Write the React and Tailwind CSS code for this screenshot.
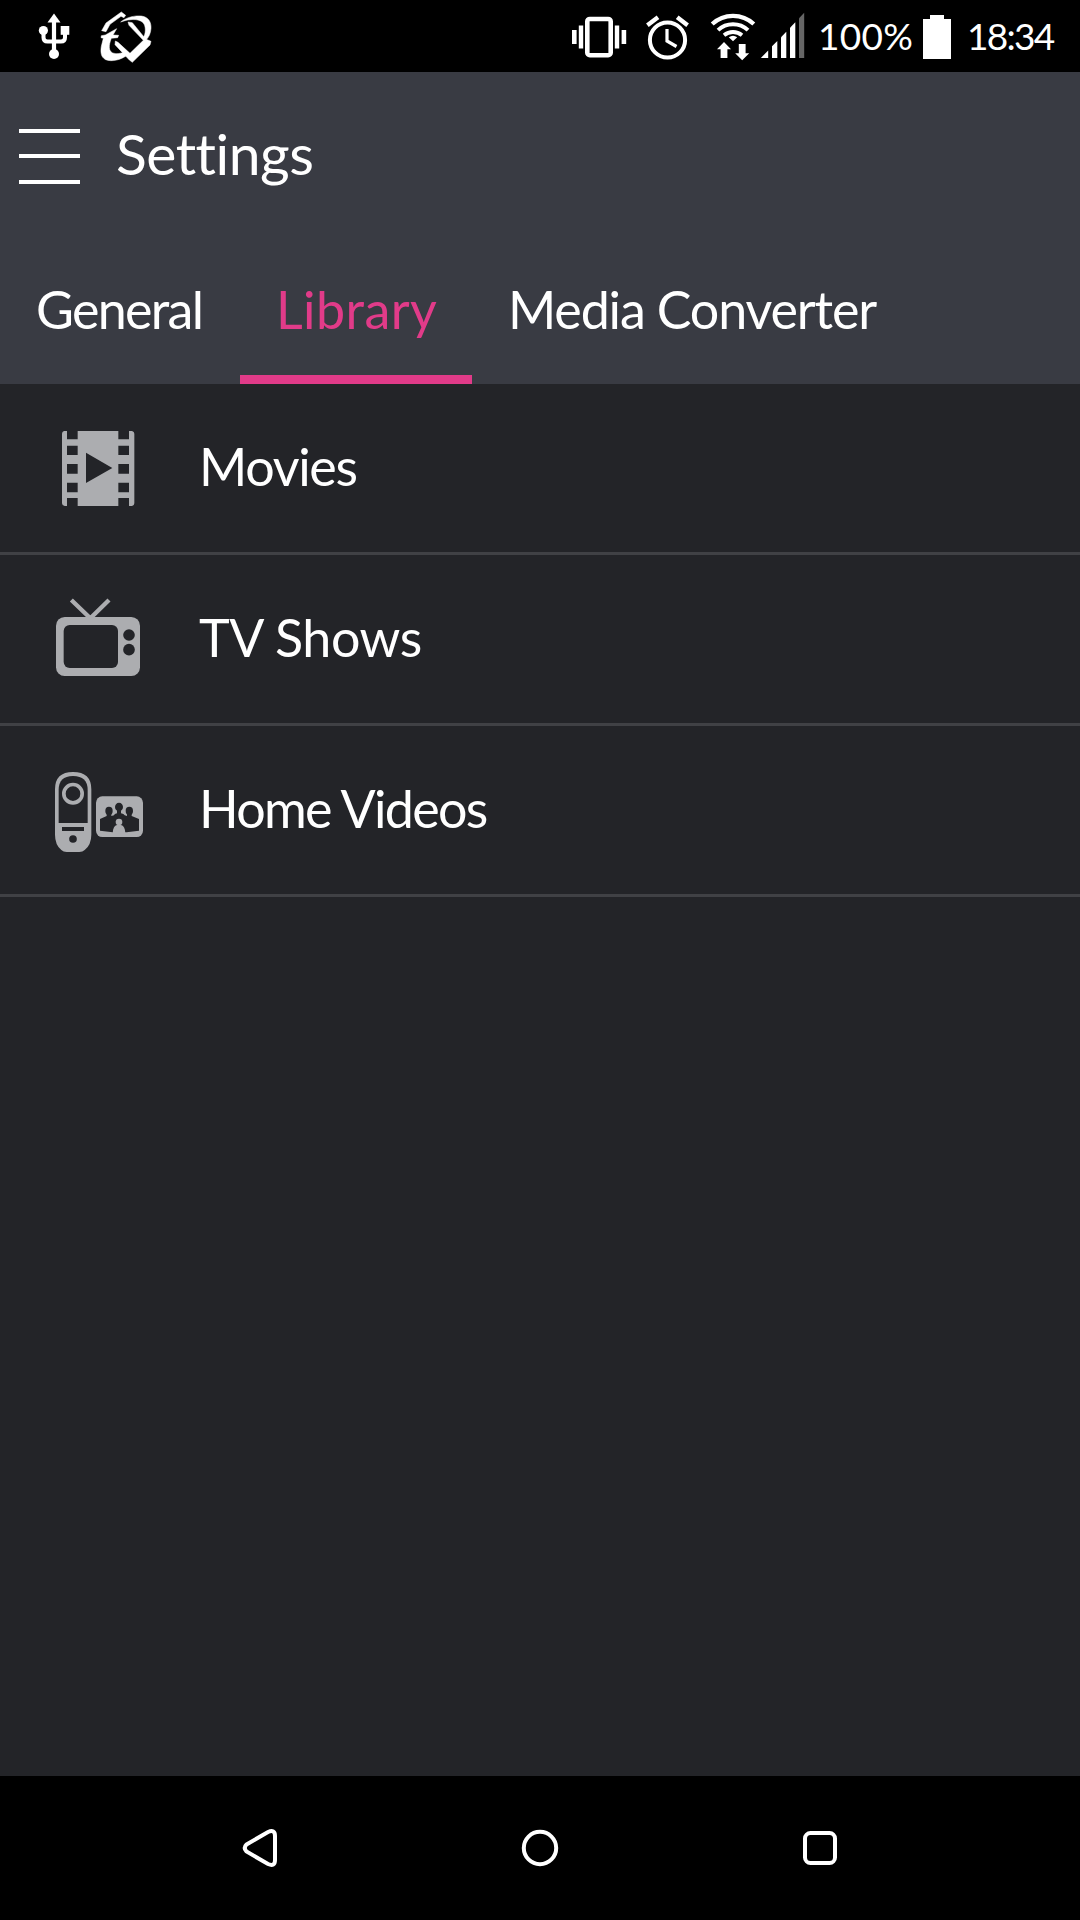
import React, { useState } from 'react';

const UsbIcon = () => (
  <svg className="h-[72px] w-[36px]" viewBox="36 0 36 72" fill="none">
    <path d="M54 13.5 L60.5 22.5 H47.5 Z" fill="#fff" />
    <path d="M54 20 V52" stroke="#fff" strokeWidth="4.2" />
    <path d="M43.5 31 V37.5 Q43.5 41.5 47.5 41.5 H61 Q65 41.5 65 37.5 V30" stroke="#fff" strokeWidth="4" />
    <circle cx="43.4" cy="30.5" r="4.6" fill="#fff" />
    <rect x="60.7" y="26" width="8.6" height="8.8" fill="#fff" />
    <circle cx="54" cy="54" r="5" fill="#fff" />
  </svg>
);

const SecurityIcon = () => (
  <svg className="ml-7 h-[72px] w-[52px]" viewBox="300 0 156 216" fill="#fff" stroke="#fff" strokeWidth="1.5">
    <path d="M305 92 L318 69 L364 36 L377 46 L372 53 L363 49 L330 73 L318 95 Z" />
    <path d="M362 66 C378 52 404 46 424 48 C446 51 454 67 453 85 C452 100 447 112 437 121 L430 113 C437 101 438 84 432 72 C423 57 396 54 362 66 Z" />
    <path d="M384 66 L397 68 L437 117 L453 124 L450 135 L397 187 L388 180 L345 134 L346 123 L354 127 L390 160 L430 121 L387 76 Z" />
    <path d="M350 86 L339 105 L356 106 L353 113 L334 115 C325 138 326 153 338 159 C350 163 362 160 372 157 L378 168 C360 180 335 186 317 179 C303 172 301 157 304 139 L310 115 L303 113 L304 107 L316 105 Z" />
  </svg>
);

const VibrateIcon = () => (
  <svg className="h-[72px] w-[56px]" viewBox="571 0 56 72" fill="#fff">
    <rect x="572" y="30" width="4.6" height="14" />
    <rect x="578.8" y="25.5" width="4.4" height="23" />
    <rect x="587.3" y="19" width="23.4" height="36.2" rx="2.5" fill="none" stroke="#fff" strokeWidth="4.6" />
    <rect x="614.8" y="25.5" width="4.4" height="23" />
    <rect x="621.6" y="30" width="4.6" height="14" />
  </svg>
);

const AlarmIcon = () => (
  <svg className="ml-[18px] h-[72px] w-[46px]" viewBox="645 0 46 72" fill="none" stroke="#fff">
    <circle cx="667.5" cy="40" r="17.6" strokeWidth="4" />
    <path d="M667 29 V41 L676.5 46.5" strokeWidth="3.2" />
    <path d="M647.4 25.3 L658 17.3 M687.6 25.3 L677.2 17.3" strokeWidth="4.4" />
  </svg>
);

const WifiIcon = () => (
  <svg className="ml-[18px] h-[72px] w-[48px]" viewBox="709 0 48 72" fill="none" stroke="#fff">
    <path d="M712.2 24 A30.5 30.5 0 0 1 753.8 24" strokeWidth="4.2" />
    <path d="M718 30.1 A22 22 0 0 1 748 30.1" strokeWidth="4" />
    <path d="M724 35.3 A14 14 0 0 1 742 35.3" strokeWidth="3.8" />
    <path d="M728.8 37.3 Q733 34 737.2 37.3 L733 41.3 Z" fill="#fff" stroke="none" />
    <path d="M724 42 L731 49.2 H727.4 V58 H720.6 V49.2 H717 Z" fill="#fff" stroke="none" />
    <path d="M742.2 60.3 L735.2 53.2 H738.8 V44 H745.6 V53.2 H749.2 Z" fill="#fff" stroke="none" />
  </svg>
);

const SignalIcon = () => (
  <svg className="ml-[2px] h-[72px] w-[46px]" viewBox="759 0 46 72" fill="#fff">
    <path d="M760.8 58 L768.2 50.5 V58 Z" />
    <path d="M772 58 V46.3 L777.3 41 V58 Z" />
    <path d="M781 58 V37.2 L786.3 31.8 V58 Z" />
    <path d="M790 58 V27.7 L795.3 22.2 V58 Z" />
    <path d="M799 58 V18.2 L804.2 12.8 V58 Z" fill="#666" />
  </svg>
);

const BatteryIcon = () => (
  <svg className="h-[72px] w-[28px]" viewBox="923 0 28 72" fill="#fff">
    <path d="M930 15 H944 V19 H951 V59 H923 V19 H930 Z" />
  </svg>
);

const MoviesIcon = () => (
  <svg className="size-[120px]" viewBox="0 -6 360 360">
    <path
      fill="#acadb0"
      fillRule="evenodd"
      d="M72 63 H81 V88 H113 V63 H235 V88 H267 V63 H276 Q283 65 283 71 V280 Q283 286 276 288 H267 V264 H235 V288 H113 V264 H81 V288 H74 Q66 286 66 280 V71 Q66 65 72 63 Z
        M81 107 V135 H113 V107 Z M81 162 V191 H113 V162 Z M81 218 V247 H113 V218 Z
        M235 107 V135 H267 V107 Z M235 162 V191 H267 V162 Z M235 218 V247 H267 V218 Z
        M138 128 V219 L217 174 Z"
    />
  </svg>
);

const TvIcon = () => (
  <svg className="size-[120px]" viewBox="0 -3 360 360">
    <path d="M94 60 L151 115 L207 60" fill="none" stroke="#acadb0" strokeWidth="13" />
    <rect x="48" y="111" width="252" height="177" rx="26" fill="#acadb0" />
    <rect x="71" y="135" width="163" height="129" rx="18" fill="#232428" />
    <circle cx="267" cy="165" r="17.5" fill="#232428" />
    <circle cx="267" cy="209" r="17.5" fill="#232428" />
  </svg>
);

const HomeVideosIcon = () => (
  <svg className="size-[120px]" viewBox="0 0 360 360">
    <path d="M45 118 Q45 66 99 66 Q154 66 154 118 V254 Q154 284 134 300 Q128 306 118 306 H80 Q70 306 64 300 Q45 284 45 254 Z" fill="#acadb0" />
    <path d="M56 219 V120 Q56 78 99 78 Q143 78 143 120 V219 Z" fill="#232428" />
    <circle cx="99" cy="131" r="27.5" fill="none" stroke="#acadb0" strokeWidth="11" />
    <rect x="66" y="231" width="66" height="12" fill="#232428" />
    <circle cx="99" cy="267" r="11.5" fill="#232428" />
    <rect x="168" y="139" width="141" height="122" rx="19" fill="#acadb0" />
    <g fill="#232428">
      <ellipse cx="207" cy="183" rx="11" ry="12.5" />
      <ellipse cx="237" cy="171" rx="12" ry="13" />
      <ellipse cx="268" cy="183" rx="11" ry="12.5" />
      <path d="M180 207 L200 198 V190 H214 V198 L222 196 Q223 192 231 190 V180 H243 V190 Q252 192 254 196 L261 198 V190 H275 V198 L297 207 V242 L260 247 H218 L180 242 Z" />
    </g>
    <circle cx="237" cy="216" r="10" fill="#acadb0" />
    <path d="M218 250 Q219 227 231 225 H243 Q255 227 256 250 Z" fill="#acadb0" />
  </svg>
);

const tabs = [
  { label: 'General', width: 'w-[240px]', tracking: 'tracking-[-1.7px]' },
  { label: 'Library', width: 'w-[232px]', tracking: 'tracking-[0.4px]' },
  { label: 'Media Converter', width: 'w-[440px]', tracking: 'tracking-[-1.15px]' },
];

const rows = [
  { label: 'Movies', Icon: MoviesIcon, tracking: 'tracking-[-1.3px]' },
  { label: 'TV Shows', Icon: TvIcon, tracking: 'tracking-[-0.45px]' },
  { label: 'Home Videos', Icon: HomeVideosIcon, tracking: 'tracking-[-1.7px]' },
];

const StatusBar = () => (
  <div className="flex h-[72px] items-center bg-black pl-9 text-[37px] leading-[72px] slashed-zero">
    <UsbIcon />
    <SecurityIcon />
    <div className="ml-auto flex items-center">
      <VibrateIcon />
      <AlarmIcon />
      <WifiIcon />
      <SignalIcon />
      <span className="w-[118px] pl-[13px] tracking-[0.3px]">100%</span>
      <BatteryIcon />
      <span className="w-[129px] pl-[16px] tracking-[-1.7px]">18:34</span>
    </div>
  </div>
);

const App = () => {
  const [activeTab, setActiveTab] = useState('Library');

  return (
    <div className="flex h-[1920px] w-[1080px] flex-col overflow-hidden bg-[#232428] font-['Lato',sans-serif] text-white">
      <StatusBar />

      <header className="h-[312px] bg-[#393b43]">
        <div className="flex h-[168px] items-center">
          <button className="ml-[19px] flex w-[61px] flex-col gap-[21.5px]" aria-label="Menu">
            <span className="h-1 w-full bg-white" />
            <span className="h-1 w-full bg-white" />
            <span className="h-1 w-full bg-white" />
          </button>
          <h1 className="ml-[36px] pb-1.5 text-[57px] leading-[72px] tracking-[-0.5px] whitespace-nowrap">Settings</h1>
        </div>

        <nav className="flex h-36">
          {tabs.map((tab) => (
            <button
              key={tab.label}
              onClick={() => setActiveTab(tab.label)}
              className={`h-36 shrink-0 border-b-9 pt-0.5 pl-9 text-left text-[52px] whitespace-nowrap ${tab.width} ${tab.tracking} ${
                activeTab === tab.label ? 'border-[#e13b89] text-[#e13b89]' : 'border-transparent'
              }`}
            >
              {tab.label}
            </button>
          ))}
        </nav>
      </header>

      <main className="flex-1">
        {rows.map(({ label, Icon, tracking }) => (
          <div key={label} className="flex h-[171px] items-center border-b-3 border-[#404145] pl-10">
            <Icon />
            <span className={`ml-[39px] pb-1 text-[52px] leading-[64px] whitespace-nowrap ${tracking}`}>{label}</span>
          </div>
        ))}
      </main>

      <footer className="flex h-36 items-center justify-center gap-[240px] bg-black">
        <svg className="size-10" viewBox="240 1828 40 40" fill="none" stroke="#fff" strokeWidth="4">
          <path d="M246.5 1844.5 L268 1832 Q275 1829 275 1836 V1860 Q275 1867 268 1864 L246.5 1851.5 Q243 1848 246.5 1844.5 Z" />
        </svg>
        <svg className="size-10" viewBox="520 1828 40 40" fill="none" stroke="#fff" strokeWidth="4">
          <circle cx="540" cy="1848" r="16.2" />
        </svg>
        <svg className="size-10" viewBox="800 1828 40 40" fill="none" stroke="#fff" strokeWidth="4">
          <rect x="805" y="1833" width="30" height="30" rx="5.5" />
        </svg>
      </footer>
    </div>
  );
};

export default App;
